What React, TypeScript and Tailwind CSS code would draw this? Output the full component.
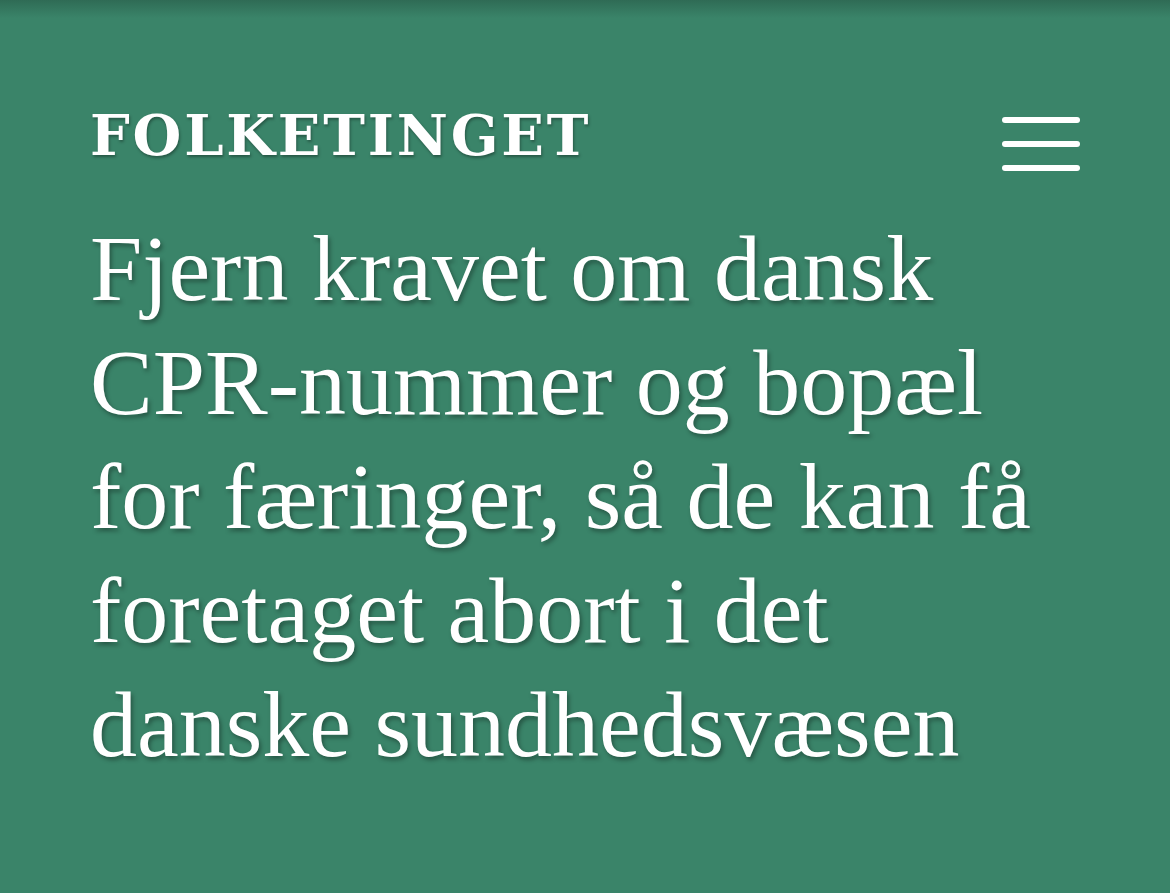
export default function App() {
    return (
        <div className="relative w-full h-[893px] bg-[#3a8469] overflow-hidden">
            <div className="absolute inset-x-0 top-0 h-[18px] bg-gradient-to-b from-[#2f6b55] to-transparent"></div>
            <div className="flex flex-col px-[90px] pt-[100px]">
                <div className="flex flex-row items-start justify-between">
                    <h2 className="text-[56px] leading-[70px] font-bold tracking-[0.05em] text-white [font-family:'DejaVu_Serif',serif] [text-shadow:1px_2px_3px_rgba(0,0,0,0.35)]">FOLKETINGET</h2>
                    <button className="flex flex-col gap-[18px] mt-[17px]">
                        <span className="block w-[78px] h-[6px] rounded-full bg-white"></span>
                        <span className="block w-[78px] h-[6px] rounded-full bg-white"></span>
                        <span className="block w-[78px] h-[6px] rounded-full bg-white"></span>
                    </button>
                </div>
                <h1 className="mt-[40px] text-[94px] leading-[114px] text-white [font-family:'Liberation_Serif',serif] [text-shadow:2px_3px_4px_rgba(0,0,0,0.35)]">
                    Fjern kravet om dansk<br />
                    CPR-nummer og bopæl<br />
                    for færinger, så de kan få<br />
                    foretaget abort i det<br />
                    danske sundhedsvæsen
                </h1>
            </div>
        </div>
    )
}
